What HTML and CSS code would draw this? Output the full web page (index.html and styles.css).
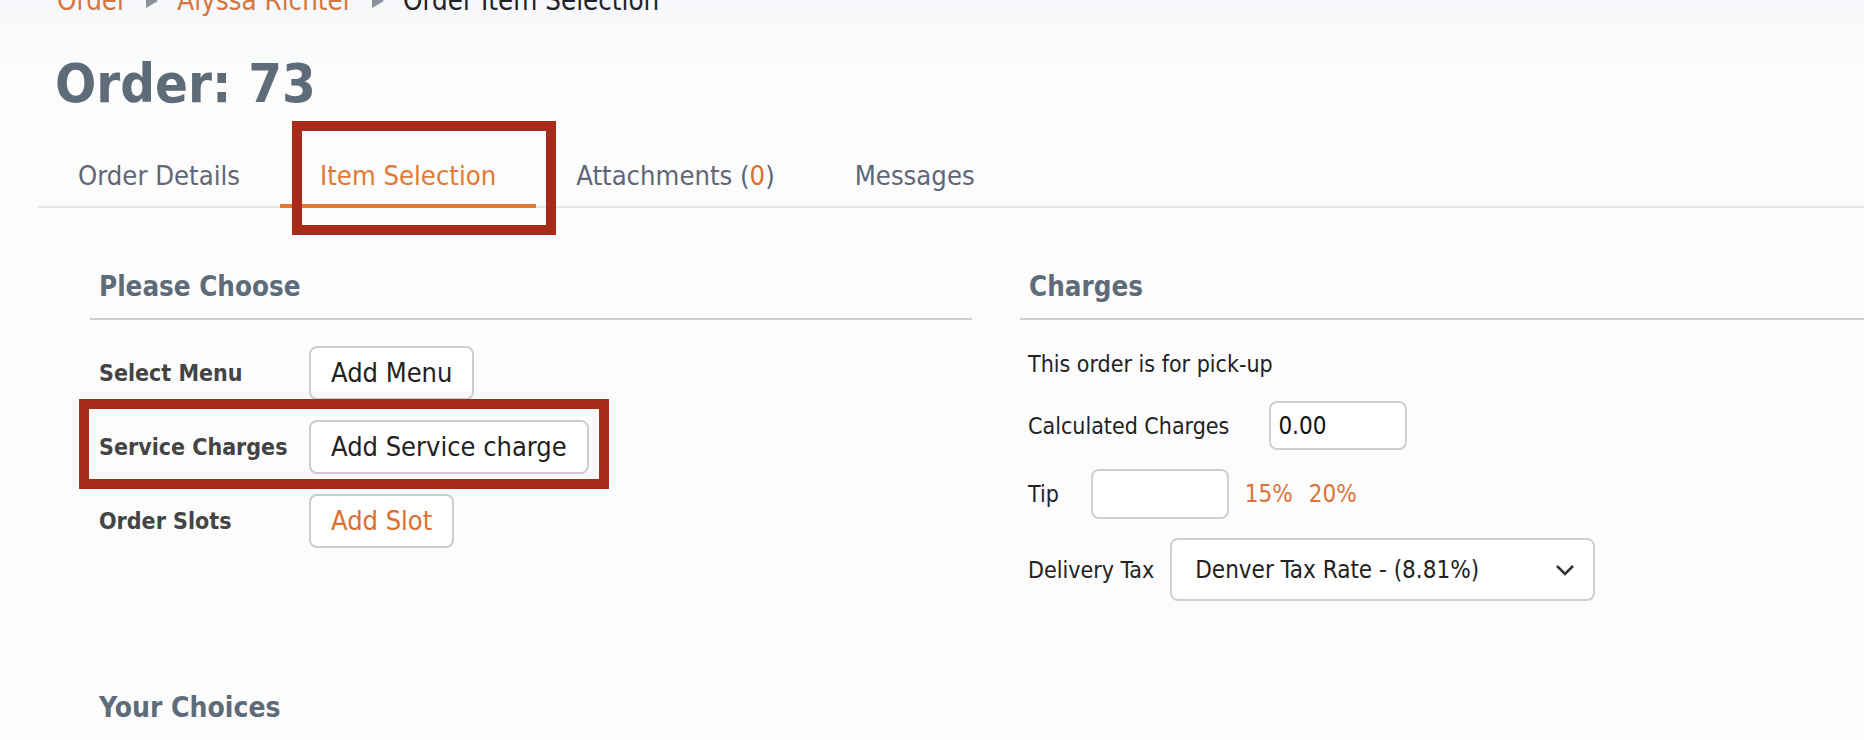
FILE: index.html
```html
<!DOCTYPE html>
<html lang="en">
<head>
  <meta charset="UTF-8" />
  <meta name="viewport" content="width=device-width, initial-scale=1.0"/>
  <title>Order 73 - Item Selection</title>
  <link rel="stylesheet" href="styles.css">
</head>
<body>
  <!-- breadcrumb, mostly scrolled off the top -->
  <nav class="crumbs">
    <a class="crumb-link">Order</a>
    <svg class="crumb-sep" width="12" height="14" viewBox="0 0 12 14"><polygon points="0,0 12,7 0,14" /></svg>
    <a class="crumb-link">Alyssa Richter</a>
    <svg class="crumb-sep" width="12" height="14" viewBox="0 0 12 14"><polygon points="0,0 12,7 0,14" /></svg>
    <span class="crumb-current">Order Item Selection</span>
  </nav>

  <h1 class="page-title">Order: 73</h1>

  <ul class="tabs">
    <li class="tab">Order Details</li>
    <li class="tab tab-active">Item Selection<span class="mark mark-tab"></span></li>
    <li class="tab">Attachments (<span class="count">0</span>)</li>
    <li class="tab">Messages</li>
  </ul>

  <div class="columns">
    <!-- left: what can be added -->
    <section class="panel">
      <h2 class="panel-title">Please Choose</h2>
      <div class="choice-list">
        <div class="choice-row">
          <span class="choice-label">Select Menu</span>
          <button class="btn">Add Menu</button>
        </div>
        <div class="choice-row">
          <span class="choice-label">Service Charges</span>
          <button class="btn">Add Service charge</button>
          <span class="mark mark-row"></span>
        </div>
        <div class="choice-row">
          <span class="choice-label">Order Slots</span>
          <button class="btn btn-accent">Add Slot</button>
        </div>
      </div>
    </section>

    <!-- right: charges -->
    <section class="panel">
      <h2 class="panel-title">Charges</h2>
      <div class="charges-body">
        <p class="pickup-note">This order is for pick-up</p>
        <div class="charge-row charge-row-calc">
          <span>Calculated Charges</span>
          <input class="text-input" type="text" value="0.00">
        </div>
        <div class="charge-row charge-row-tip">
          <span>Tip</span>
          <input class="text-input text-input-tip" type="text" value="">
          <span class="tip-links">
            <a class="tip-link">15%</a>
            <a class="tip-link">20%</a>
          </span>
        </div>
        <div class="charge-row charge-row-tax">
          <span>Delivery Tax</span>
          <div class="select-box">
            <span>Denver Tax Rate - (8.81%)</span>
            <svg width="20" height="12" viewBox="0 0 20 12"><polyline points="2,2 10,10 18,2" /></svg>
          </div>
        </div>
      </div>
    </section>
  </div>

  <h2 class="panel-title panel-title-plain">Your Choices</h2>
</body>
</html>
```
FILE: styles.css
```css
body {
  margin: 0;
  font-family: "DejaVu Sans Condensed", "DejaVu Sans", sans-serif;
  font-stretch: condensed;
  color: #222;
  background: #fcfcfc linear-gradient(#f6f7fa, #fafcfb) no-repeat;
  background-size: 100% 62px;
  overflow-x: hidden;
}

/* breadcrumb */
.crumbs {
  display: flex;
  align-items: center;
  gap: 19px;
  height: 27px;
  margin: -13px 0 0 57px;
  font-size: 27.5px;
  line-height: 27px;
}

.crumb-link {
  color: #d4763f;
}

.crumb-sep {
  fill: #8b929b;
}

.crumb-current {
  color: #1f2328;
}

.page-title {
  margin: 43px 0 0 55px;
  font-size: 54px;
  line-height: 54px;
  color: #5e6b78;
}

/* tabs */
.tabs {
  display: flex;
  list-style: none;
  margin: 33px 0 0 38px;
  padding: 0;
  border-bottom: 2px solid #e6e6e6;
}

.tab {
  position: relative;
  padding: 16px 40px 12px;
  margin-bottom: -2px;
  font-size: 27.2px;
  line-height: 32px;
  color: #5f6677;
  border-bottom: 4px solid transparent;
}

.tab-active {
  color: #e27a33;
  border-bottom-color: #e47b30;
}

.count {
  color: #d9702f;
}

/* red annotation frames */
.mark {
  position: absolute;
  box-sizing: border-box;
  border: 10px solid #a62b1b;
  pointer-events: none;
}

.mark-tab {
  left: 12px;
  top: -23px;
  width: 264px;
  height: 114px;
}

.mark-row {
  left: -20px;
  top: -21px;
  width: 530px;
  height: 90px;
}

/* two panels */
.columns {
  display: grid;
  grid-template-columns: 882px 882px;
  column-gap: 48px;
  margin: 62px 0 0 90px;
}

.panel-title {
  margin: 0;
  padding: 0 9px 16px;
  font-size: 27.5px;
  line-height: 32px;
  color: #5e6b78;
  border-bottom: 2px solid #cfcfcf;
}

.panel-title-plain {
  margin: 91px 0 0 90px;
  border-bottom: none;
  font-size: 28px;
}

.choice-list {
  display: flex;
  flex-direction: column;
  gap: 20px;
  padding: 26px 9px 0;
}

.choice-row {
  position: relative;
  display: flex;
  align-items: center;
}

.choice-label {
  width: 210px;
  font-size: 23px;
  line-height: 28px;
  font-weight: bold;
  color: #444;
}

.btn {
  font-family: inherit;
  font-stretch: condensed;
  font-size: 27px;
  line-height: 32px;
  padding: 9px 20px;
  border: 2px solid #cdcdcd;
  border-radius: 8px;
  background: #fff;
  color: #222;
}

.btn-accent {
  color: #d9702f;
}

/* charges */
.charges-body {
  display: flex;
  flex-direction: column;
  gap: 19px;
  padding: 30px 8px 0;
  font-size: 23px;
  line-height: 28px;
}

.pickup-note {
  margin: 0 0 4px;
}

.charge-row {
  display: flex;
  align-items: center;
}

.charge-row-calc {
  gap: 40px;
}

.charge-row-tip {
  gap: 32px;
}

.charge-row-tax {
  gap: 16px;
}

.text-input {
  box-sizing: border-box;
  width: 138px;
  height: 49px;
  padding: 0 7px;
  border: 2px solid #cfcfcf;
  border-radius: 8px;
  background: #fff;
  font-family: inherit;
  font-stretch: condensed;
  font-size: 24px;
  color: #111;
}

.text-input-tip {
  height: 50px;
}

.tip-links {
  display: flex;
  gap: 16px;
  margin-left: -16px;
  font-size: 24px;
}

.tip-link {
  color: #d9733a;
}

.select-box {
  box-sizing: border-box;
  width: 425px;
  height: 63px;
  display: flex;
  align-items: center;
  justify-content: space-between;
  padding: 0 18px 0 23px;
  border: 2px solid #cfcfcf;
  border-radius: 8px;
  background: #fff;
  font-size: 24px;
}

.select-box polyline {
  fill: none;
  stroke: #333;
  stroke-width: 2.5;
}
```
